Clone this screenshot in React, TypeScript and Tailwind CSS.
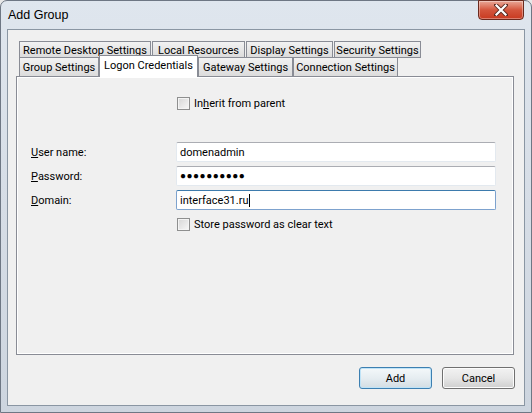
import type { ReactNode } from "react";

const backTabs = [
  ["Remote Desktop Settings", "w-[132px]"],
  ["Local Resources", "w-[93px]"],
  ["Display Settings", "w-[87px]"],
  ["Security Settings", "w-[87px]"],
];

function Tab({ label, width, selected }: { label: string; width: string; selected?: boolean }) {
  if (selected) {
    return (
      <div
        className={`${width} relative z-10 -mb-[1px] -mt-[3px] flex h-[22px] items-start justify-center whitespace-nowrap border border-b-0 border-[#898c95] bg-white pt-[4px]`}
      >
        {label}
      </div>
    );
  }
  return (
    <div
      className={`${width} flex h-[19px] items-center justify-center whitespace-nowrap border border-b-0 border-[#898c95] bg-gradient-to-b from-[#f2f2f2] to-[#dcdcdc] pt-[1px]`}
    >
      {label}
    </div>
  );
}

function Check({ label }: { label: ReactNode }) {
  return (
    <div className="flex items-center gap-[4px] whitespace-nowrap">
      <span className="h-[13px] w-[13px] border border-[#8e8f8f] bg-gradient-to-br from-[#d6d6d6] to-[#f8f8f8] shadow-[inset_0_0_0_1px_#f4f4f4]" />
      <span>{label}</span>
    </div>
  );
}

function Field({ label, value, focused }: { label: ReactNode; value: ReactNode; focused?: boolean }) {
  return (
    <div className="flex items-center">
      <div className="w-[145px] whitespace-nowrap">{label}</div>
      <div
        className={`flex h-[20px] w-[320px] items-center rounded-[2px] border bg-white px-[3px] whitespace-nowrap ${
          focused ? "border-[#7da2ce] border-t-[#3d7bad]" : "border-[#e3e9ef] border-t-[#abadb3]"
        }`}
      >
        {value}
      </div>
    </div>
  );
}

export default function App() {
  return (
    <div className="h-[413px] w-[532px] overflow-hidden bg-[#e8e8e8] font-['Roboto','Liberation_Sans',sans-serif] text-[11px] leading-none text-black">
      <div className="relative flex h-[413px] flex-col rounded-t-[7px] border border-[#6e7784] bg-gradient-to-b from-[#dfe6ee] via-[#d6dde6] to-[#cdd5df] px-[6px] pb-[6px]">
        {/* title bar */}
        <div className="flex h-[28px] items-center pl-[1px] font-['Liberation_Sans',sans-serif] text-[12.5px]">Add Group</div>
        <div className="absolute right-[7px] top-[-1px] flex h-[20px] w-[46px] items-center justify-center rounded-b-[4px] border border-[#6b2a1e] bg-gradient-to-b from-[#e8a797] via-[#d4553c] to-[#c8391f] shadow-[inset_0_0_0_1px_rgba(255,255,255,0.35)]">
          <svg width="14" height="12" viewBox="0 0 14 12">
            <path d="M2 1 L12 11 M12 1 L2 11" stroke="#5a2b22" strokeWidth="4" strokeLinecap="square" />
            <path d="M2.5 1.5 L11.5 10.5 M11.5 1.5 L2.5 10.5" stroke="#ffffff" strokeWidth="2.2" strokeLinecap="square" />
          </svg>
        </div>

        {/* client area */}
        <div className="flex flex-1 flex-col border border-[#8a96a3] bg-[#f0f0f0] px-[8px] pt-[11px]">
          {/* tabs */}
          <div className="flex flex-col pl-[3px]">
            <div className="flex gap-[1px]">
              {backTabs.map(([l, w]) => (
                <div
                  key={l}
                  className={`${w} flex h-[17px] items-center justify-center whitespace-nowrap border border-[#898c95] bg-gradient-to-b from-[#f2f2f2] to-[#dcdcdc] pt-[1px]`}
                >
                  {l}
                </div>
              ))}
            </div>
            <div className="-mt-[1px] flex items-end">
              <Tab label="Group Settings" width="w-[80px]" />
              <Tab label="Logon Credentials" width="w-[99px]" selected />
              <Tab label="Gateway Settings" width="w-[95px]" />
              <Tab label="Connection Settings" width="w-[105px]" />
            </div>
          </div>

          <div className="h-[279px] w-[498px] border border-[#898c95] bg-[#f0f0f0] shadow-[inset_0_0_0_1px_#ffffff]">
            <div className="flex flex-col pl-[14px] pt-[20px]">
              <div className="pl-[146px]">
                <Check
                  label={
                    <>
                      In<span className="underline">h</span>erit from parent
                    </>
                  }
                />
              </div>
              <div className="mt-[32px] flex flex-col gap-[4px]">
                <Field
                  label={
                    <>
                      <span className="underline">U</span>ser name:
                    </>
                  }
                  value="domenadmin"
                />
                <Field
                  label={
                    <>
                      <span className="underline">P</span>assword:
                    </>
                  }
                  value={<span className="text-[10px] tracking-[0.5px]">●●●●●●●●●●</span>}
                />
                <Field
                  label={
                    <>
                      <span className="underline">D</span>omain:
                    </>
                  }
                  value={
                    <>
                      interface31.ru<span className="ml-[1px] h-[13px] w-[1px] bg-black" />
                    </>
                  }
                  focused
                />
              </div>
              <div className="mt-[8px] pl-[146px]">
                <Check label="Store password as clear text" />
              </div>
            </div>
          </div>

          {/* buttons */}
          <div className="mt-[12px] flex justify-end gap-[10px] pr-[1px]">
            <button className="h-[22px] w-[73px] rounded-[3px] border border-[#3c7fb1] bg-gradient-to-b from-[#f4f8fa] via-[#e6edf1] to-[#d3dde3] shadow-[inset_0_0_0_1px_#bfe3f7]">
              Add
            </button>
            <button className="h-[22px] w-[73px] rounded-[3px] border border-[#707070] bg-gradient-to-b from-[#f2f2f2] via-[#e6e6e6] to-[#cfcfcf] shadow-[inset_0_0_0_1px_#fcfcfc]">
              Cancel
            </button>
          </div>
        </div>
      </div>
    </div>
  );
}
